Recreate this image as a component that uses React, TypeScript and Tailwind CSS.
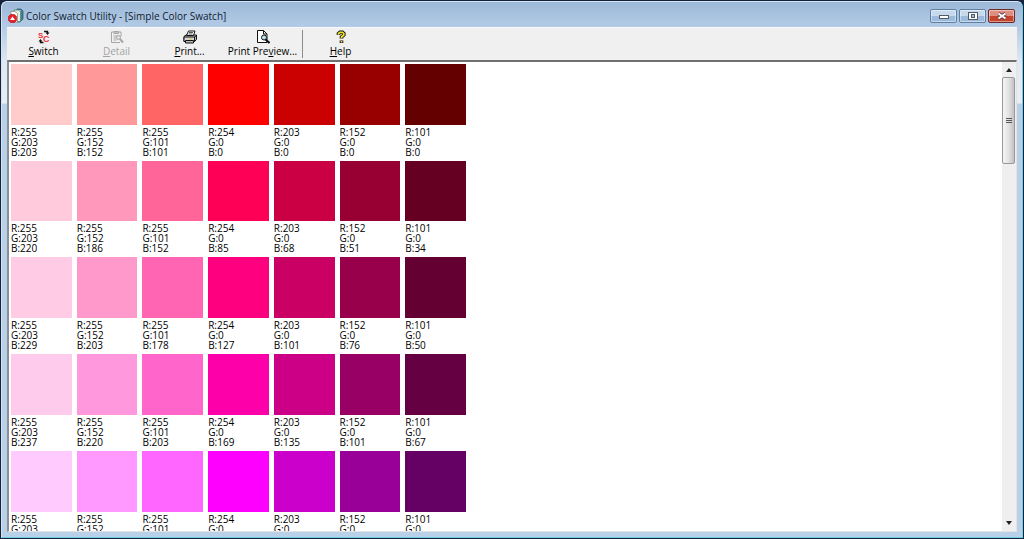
import React, { useState } from 'react'

type ToolButtonProps = {
  icon: React.ReactNode;
  before?: string;
  accessKey: string;
  after: string;
  disabled?: boolean;
}

// red and green of each column, the blue channel changes per row
const columns = [
  { r: 255, g: 203 },
  { r: 255, g: 152 },
  { r: 255, g: 101 },
  { r: 254, g: 0 },
  { r: 203, g: 0 },
  { r: 152, g: 0 },
  { r: 101, g: 0 },
];

const blues = [
  [203, 152, 101, 0, 0, 0, 0],
  [220, 186, 152, 85, 68, 51, 34],
  [229, 203, 178, 127, 101, 76, 50],
  [237, 220, 203, 169, 135, 101, 67],
  [255, 255, 255, 254, 203, 152, 101],
];

function AppIcon() {
  return (
    <svg className="w-4 h-4 shrink-0" viewBox="0 0 16 16">
      <path d="M9 1h4l2 2v8l-3 3H9z" fill="#3f7fa6" stroke="#2f5b78" strokeWidth="0.8" />
      <path d="M10 2h2.500v8H10z" fill="#cfe3ee" />
      <path d="M6 2h4.500l2 2v9.500H6z" fill="#e6efdc" stroke="#4f8060" strokeWidth="0.8" />
      <path d="M3 3.500h4l2.500 2V14H3z" fill="#fff" stroke="#8c8c8c" strokeWidth="0.8" />
      <path d="M2.500 6.500h4l2 2v4l-2 2h-4l-2-2v-4z" fill="#e5202b" stroke="#b3141e" strokeWidth="0.6" />
      <path d="M4.500 8.500l2.500 3.500H2z" fill="#fff" />
    </svg>
  )
}

function SwitchIcon() {
  return (
    <svg className="w-3.5 h-3.5" viewBox="0 0 14 14">
      <text x="1" y="8" fontSize="8" fontWeight="700" fontFamily="Liberation Sans, sans-serif" fill="#ec2f3a">S</text>
      <text x="6" y="12" fontSize="9" fontWeight="700" fontFamily="Liberation Sans, sans-serif" fill="#ec2f3a">C</text>
      <path d="M7 1.500h3.500V3M6.500 12.500H3.500V11" fill="none" stroke="#111" strokeWidth="1.3" />
      <path d="M8.500 2.500h4l-2 2.500zM1.500 11.500l2-2.500 2 2.500z" fill="#111" />
    </svg>
  )
}

function DetailIcon() {
  return (
    <svg className="w-3.5 h-3.5" viewBox="0 0 14 14" fill="none" stroke="#a6a6a6">
      <path d="M4 2H1.500v10.500H10M8.500 2H11v4.500" />
      <path d="M4 1.500h4.500v2H4z" fill="#c4c4c4" />
      <path d="M3.500 6h4M3.500 8h3M3.500 10h3" />
      <circle cx="8.500" cy="7.500" r="2" fill="#e2e2e2" />
      <path d="M10 9l3 3.500" strokeWidth="2" />
    </svg>
  )
}

function PrintIcon() {
  return (
    <svg className="w-3.5 h-3.5" viewBox="0 0 14 14" stroke="#111" strokeWidth="1">
      <path d="M1 6.500L3 5h10.500v4.500l-2 2H1z" fill="#b9b9b9" />
      <path d="M3.500 5.500L5.500 1h6.500l-1.500 4.500z" fill="#fff" />
      <path d="M6 2.500h4M5.500 4h4" strokeWidth="0.7" />
      <path d="M1 7h10.500v4.500H1zM11.500 7l2-1.500" fill="#d8d8d8" />
      <path d="M2.500 10.500h8v2.500h-8z" fill="#bbb" />
      <path d="M6.500 9h2" stroke="#d9c500" />
    </svg>
  )
}

function PreviewIcon() {
  return (
    <svg className="w-3.5 h-3.5" viewBox="0 0 14 14" fill="none" stroke="#111">
      <path d="M1.500 .5h6L11 4v8.500H1.500z" fill="#fff" />
      <path d="M7.500 .5V4H11" />
      <circle cx="8" cy="7.500" r="2.500" fill="#b9e4e6" />
      <path d="M9.500 9.500l4 3.500" strokeWidth="2" />
    </svg>
  )
}

function HelpIcon() {
  return (
    <svg className="w-3.5 h-3.5" viewBox="0 0 14 14" fill="none">
      <path d="M4.500 5V3.500L6 2.300h2.500L9.800 3.500V5L7.500 7v1.500M7.500 10.500v2.500" stroke="#111" strokeWidth="3.600" />
      <path d="M4.500 4.700V3.500L6 2.300h2.500L9.800 3.500V5L7.500 7v1.200M7.500 11v1.500" stroke="#f2e52b" strokeWidth="1.700" />
    </svg>
  )
}

function ToolButton({ icon, before = "", accessKey, after, disabled }: ToolButtonProps) {
  return (
    <button
      type="button"
      disabled={disabled}
      className="w-[73px] shrink-0 flex flex-col items-center pt-0.5 whitespace-nowrap text-[10px] leading-[14px] text-black disabled:text-[#a3a3a3]"
    >
      {icon}
      <span>{before}<span className="underline">{accessKey}</span>{after}</span>
    </button>
  )
}

function TitleBar() {
  const control = "h-3.5 w-[27px] rounded-xs border flex items-center justify-center shadow-[inset_0_0_0_1px_rgba(255,255,255,0.45)]";
  return (
    <header className="h-[25px] shrink-0 flex items-center justify-between pl-px pr-0.5 pt-0.5">
      <div className="flex items-center gap-0.5">
        <AppIcon />
        <h1 className="text-[10px] leading-4 text-[#101c30]">Color Swatch Utility - [Simple Color Swatch]</h1>
      </div>
      <div className="flex gap-0.5">
        <button type="button" aria-label="Minimize" className={`${control} border-[#5f7fa3] bg-linear-to-b from-[#c6d9ed] from-50% to-[#9dbbdc] to-50%`}>
          <svg className="w-3 h-3" viewBox="0 0 12 12">
            <rect x="1.500" y="5.500" width="9" height="3" fill="#fff" stroke="#535b66" />
          </svg>
        </button>
        <button type="button" aria-label="Maximize" className={`${control} border-[#5f7fa3] bg-linear-to-b from-[#c6d9ed] from-50% to-[#9dbbdc] to-50%`}>
          <svg className="w-3 h-3" viewBox="0 0 12 12">
            <rect x="1.500" y="2.500" width="9" height="7" fill="#fff" stroke="#535b66" />
            <rect x="4.500" y="4.500" width="3" height="3" fill="#9dbbdc" stroke="#535b66" />
          </svg>
        </button>
        <button type="button" aria-label="Close" className={`${control} border-[#6b2a2a] bg-linear-to-b from-[#de8d80] from-50% to-[#c4432d] to-50%`}>
          <svg className="w-3 h-3" viewBox="0 0 12 12">
            <path d="M2.500 3.500l7 5M9.500 3.500l-7 5" stroke="#5c3a3a" strokeWidth="3.600" />
            <path d="M2.500 3.500l7 5M9.500 3.500l-7 5" stroke="#fff" strokeWidth="2" />
          </svg>
        </button>
      </div>
    </header>
  )
}

function Swatch({ r, g, b }: { r: number; g: number; b: number }) {
  return (
    <li>
      <div className="aspect-square" style={{ backgroundColor: `rgb(${r}, ${g}, ${b})` }} />
      <div className="pt-0.5 pb-1 text-[10px] leading-[10px] text-black">
        <p>R:{r}</p>
        <p>G:{g}</p>
        <p>B:{b}</p>
      </div>
    </li>
  )
}

function ScrollBar() {
  return (
    <div className="w-3.5 pr-px shrink-0 flex flex-col bg-[#efefef]">
      <button type="button" aria-label="Scroll up" className="h-[15px] flex items-center justify-center">
        <svg className="w-1.5 h-1" viewBox="0 0 6 4"><path d="M0 4l3-4 3 4z" fill="#222" /></svg>
      </button>
      <div className="flex-1">
        <div className="h-[87px] rounded-xs border border-[#989898] bg-linear-to-r from-[#f5f5f5] via-[#e3e3e3] to-[#c2c2c2] flex flex-col items-center justify-center gap-px">
          <span className="w-1.5 h-px bg-[#555]" />
          <span className="w-1.5 h-px bg-[#555]" />
          <span className="w-1.5 h-px bg-[#555]" />
        </div>
      </div>
      <button type="button" aria-label="Scroll down" className="h-[17px] flex items-center justify-center">
        <svg className="w-1.5 h-1" viewBox="0 0 6 4"><path d="M0 0l3 4 3-4z" fill="#222" /></svg>
      </button>
    </div>
  )
}

export default function App() {
  const [rows] = useState(blues);

  return (
    <div className="h-screen bg-[#14223c] pt-px px-px pb-px font-['Open_Sans',sans-serif]">
      <div className="h-full flex flex-col rounded-t-md border border-[#d5e4f3] border-b-[#70cfe2] border-r-[#70cfe2] px-[5px] pb-[5px] bg-[#b9d0e9] bg-[linear-gradient(#9cb8d8,#b4cce6_26px,#dfe8f2_60px,#e8eef5_101px,transparent_102px)]">
        <TitleBar />

        <div className="flex-1 min-h-0 flex flex-col bg-[#f0f0f0]">
          <nav aria-label="Toolbar" className="h-[33px] shrink-0 flex border-t border-[#fafafa]">
            <ToolButton icon={<SwitchIcon />} accessKey="S" after="witch" />
            <ToolButton icon={<DetailIcon />} accessKey="D" after="etail" disabled />
            <ToolButton icon={<PrintIcon />} accessKey="P" after="rint..." />
            <ToolButton icon={<PreviewIcon />} before="Print Pre" accessKey="v" after="iew..." />
            <div className="w-px ml-[3px] mr-px my-0.5 bg-[#8c8c8c]" />
            <ToolButton icon={<HelpIcon />} accessKey="H" after="elp" />
          </nav>

          <main className="flex-1 min-h-0 flex bg-white border-t-2 border-l-2 border-t-[#707070] border-l-[#8a8f96] border-b border-r border-b-[#e3e3e3] border-r-[#e3e3e3]">
            <div className="flex-1 min-w-0 overflow-hidden pt-0.5 pl-0.5">
              <ul className="w-[455px] grid grid-cols-7 gap-x-[5px]">
                {rows.map((row, i) =>
                  row.map((b, j) => (
                    <Swatch key={`${i}-${j}`} r={columns[j].r} g={columns[j].g} b={b} />
                  ))
                )}
              </ul>
            </div>
            <ScrollBar />
          </main>
        </div>
      </div>
    </div>
  )
}
